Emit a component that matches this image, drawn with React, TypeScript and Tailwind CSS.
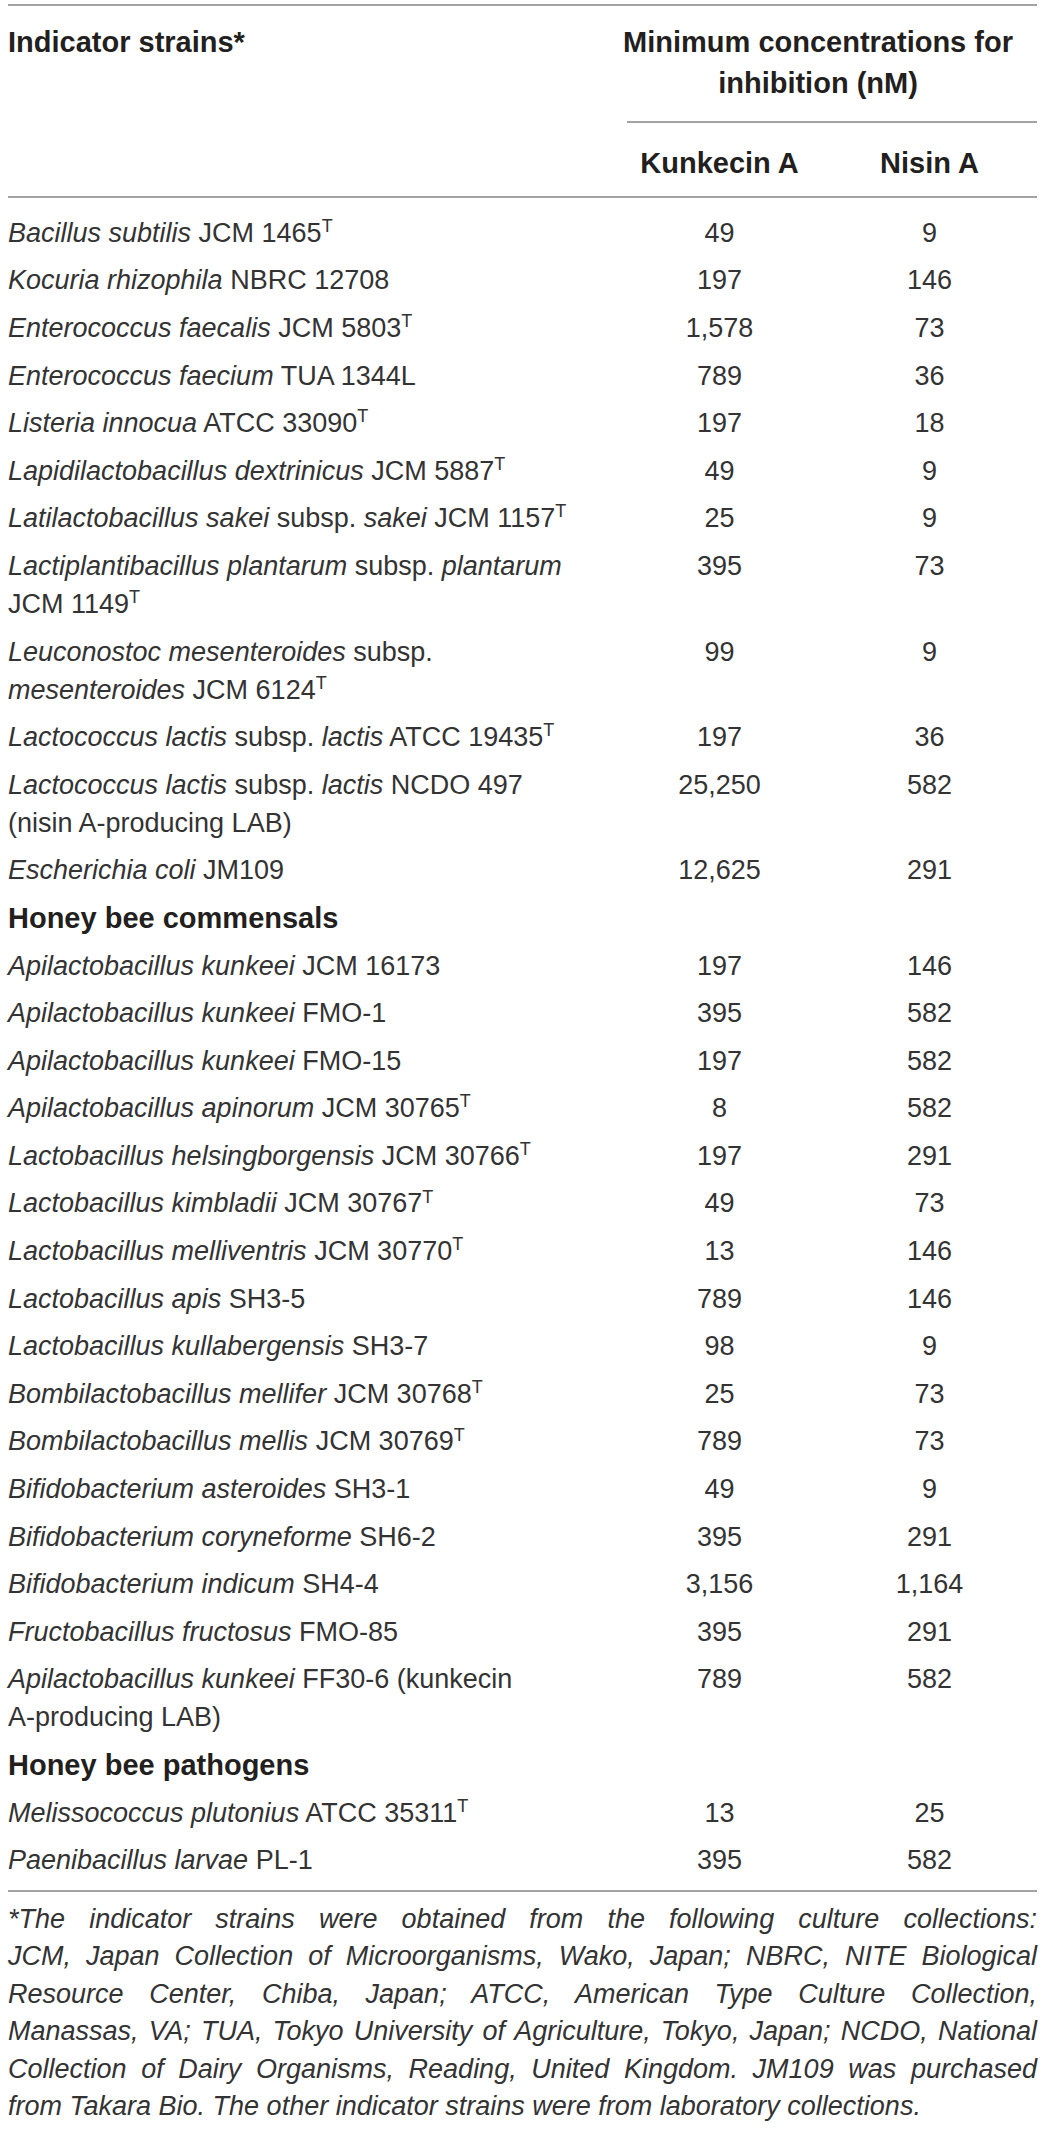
import type { ReactNode } from 'react';

type Row =
  | { kind: 'strain'; lines: ReactNode[]; k: string; n: string }
  | { kind: 'group'; title: string };

const I = ({ children }: { children: ReactNode }) => <span className="italic">{children}</span>;
const T = () => <sup className="text-[18px] -top-[0.55em]">T</sup>;

const rows: Row[] = [
  { kind: 'strain', lines: [<><I>Bacillus subtilis</I> JCM 1465<T /></>], k: '49', n: '9' },
  { kind: 'strain', lines: [<><I>Kocuria rhizophila</I> NBRC 12708</>], k: '197', n: '146' },
  { kind: 'strain', lines: [<><I>Enterococcus faecalis</I> JCM 5803<T /></>], k: '1,578', n: '73' },
  { kind: 'strain', lines: [<><I>Enterococcus faecium</I> TUA 1344L</>], k: '789', n: '36' },
  { kind: 'strain', lines: [<><I>Listeria innocua</I> ATCC 33090<T /></>], k: '197', n: '18' },
  { kind: 'strain', lines: [<><I>Lapidilactobacillus dextrinicus</I> JCM 5887<T /></>], k: '49', n: '9' },
  { kind: 'strain', lines: [<><I>Latilactobacillus sakei</I> subsp. <I>sakei</I> JCM 1157<T /></>], k: '25', n: '9' },
  {
    kind: 'strain',
    lines: [<><I>Lactiplantibacillus plantarum</I> subsp. <I>plantarum</I></>, <>JCM 1149<T /></>],
    k: '395',
    n: '73',
  },
  {
    kind: 'strain',
    lines: [<><I>Leuconostoc mesenteroides</I> subsp.</>, <><I>mesenteroides</I> JCM 6124<T /></>],
    k: '99',
    n: '9',
  },
  { kind: 'strain', lines: [<><I>Lactococcus lactis</I> subsp. <I>lactis</I> ATCC 19435<T /></>], k: '197', n: '36' },
  {
    kind: 'strain',
    lines: [<><I>Lactococcus lactis</I> subsp. <I>lactis</I> NCDO 497</>, <>(nisin A-producing LAB)</>],
    k: '25,250',
    n: '582',
  },
  { kind: 'strain', lines: [<><I>Escherichia coli</I> JM109</>], k: '12,625', n: '291' },
  { kind: 'group', title: 'Honey bee commensals' },
  { kind: 'strain', lines: [<><I>Apilactobacillus kunkeei</I> JCM 16173</>], k: '197', n: '146' },
  { kind: 'strain', lines: [<><I>Apilactobacillus kunkeei</I> FMO-1</>], k: '395', n: '582' },
  { kind: 'strain', lines: [<><I>Apilactobacillus kunkeei</I> FMO-15</>], k: '197', n: '582' },
  { kind: 'strain', lines: [<><I>Apilactobacillus apinorum</I> JCM 30765<T /></>], k: '8', n: '582' },
  { kind: 'strain', lines: [<><I>Lactobacillus helsingborgensis</I> JCM 30766<T /></>], k: '197', n: '291' },
  { kind: 'strain', lines: [<><I>Lactobacillus kimbladii</I> JCM 30767<T /></>], k: '49', n: '73' },
  { kind: 'strain', lines: [<><I>Lactobacillus melliventris</I> JCM 30770<T /></>], k: '13', n: '146' },
  { kind: 'strain', lines: [<><I>Lactobacillus apis</I> SH3-5</>], k: '789', n: '146' },
  { kind: 'strain', lines: [<><I>Lactobacillus kullabergensis</I> SH3-7</>], k: '98', n: '9' },
  { kind: 'strain', lines: [<><I>Bombilactobacillus mellifer</I> JCM 30768<T /></>], k: '25', n: '73' },
  { kind: 'strain', lines: [<><I>Bombilactobacillus mellis</I> JCM 30769<T /></>], k: '789', n: '73' },
  { kind: 'strain', lines: [<><I>Bifidobacterium asteroides</I> SH3-1</>], k: '49', n: '9' },
  { kind: 'strain', lines: [<><I>Bifidobacterium coryneforme</I> SH6-2</>], k: '395', n: '291' },
  { kind: 'strain', lines: [<><I>Bifidobacterium indicum</I> SH4-4</>], k: '3,156', n: '1,164' },
  { kind: 'strain', lines: [<><I>Fructobacillus fructosus</I> FMO-85</>], k: '395', n: '291' },
  {
    kind: 'strain',
    lines: [<><I>Apilactobacillus kunkeei</I> FF30-6 (kunkecin</>, <>A-producing LAB)</>],
    k: '789',
    n: '582',
  },
  { kind: 'group', title: 'Honey bee pathogens' },
  { kind: 'strain', lines: [<><I>Melissococcus plutonius</I> ATCC 35311<T /></>], k: '13', n: '25' },
  { kind: 'strain', lines: [<><I>Paenibacillus larvae</I> PL-1</>], k: '395', n: '582' },
];

const footnote = [
  '*The indicator strains were obtained from the following culture collections:',
  'JCM, Japan Collection of Microorganisms, Wako, Japan; NBRC, NITE Biological',
  'Resource Center, Chiba, Japan; ATCC, American Type Culture Collection,',
  'Manassas, VA; TUA, Tokyo University of Agriculture, Tokyo, Japan; NCDO, National',
  'Collection of Dairy Organisms, Reading, United Kingdom. JM109 was purchased',
  'from Takara Bio. The other indicator strains were from laboratory collections.',
];

export default function App() {
  return (
    <div className="w-[1043px] min-h-[2129px] bg-white font-['Liberation_Sans',Arial,sans-serif] text-[#333]">
      <div className="ml-[8px] mr-[6px] pt-[4px]">
        {/* header */}
        <div className="border-t-2 border-b-2 border-[#a3a3a3] text-[#231f20]">
          <div className="grid grid-cols-[619px_185px_1fr] font-bold text-[29px]">
            <div className="pt-[16px] leading-[41px]">Indicator strains*</div>
            <div className="col-span-2 flex flex-col items-center border-b-2 border-[#a3a3a3] pt-[16px] pb-[17px] pr-[28px] leading-[41px]">
              <span className="whitespace-nowrap">Minimum concentrations for</span>
              <span className="whitespace-nowrap">inhibition (nM)</span>
            </div>
            <div />
            <div className="pt-[20px] pb-[13px] text-center leading-[40px]">Kunkecin A</div>
            <div className="pt-[20px] pb-[13px] pl-[10px] text-center leading-[40px]">Nisin A</div>
          </div>
        </div>

        {/* body */}
        <div className="pt-[11px] pb-[6px] border-b-2 border-[#a3a3a3] text-[27px] leading-[38px]">
          {rows.map((row, idx) =>
            row.kind === 'group' ? (
              <div key={idx} className="py-[4.8px] font-bold text-[29px] leading-[38px] text-[#231f20]">
                {row.title}
              </div>
            ) : (
              <div key={idx} className="grid grid-cols-[619px_185px_1fr] items-start py-[4.8px]">
                <div>
                  {row.lines.map((line, i) => (
                    <div key={i} className="whitespace-nowrap">
                      {line}
                    </div>
                  ))}
                </div>
                <div className="text-center">{row.k}</div>
                <div className="pl-[10px] text-center">{row.n}</div>
              </div>
            )
          )}
        </div>

        {/* footnote */}
        <div className="pt-[9px] italic text-[27px] leading-[37.4px]">
          {footnote.map((line, i) => (
            <div
              key={i}
              className={
                i < footnote.length - 1
                  ? 'whitespace-nowrap text-justify [text-align-last:justify]'
                  : 'whitespace-nowrap'
              }
            >
              {line}
            </div>
          ))}
        </div>
      </div>
    </div>
  );
}
